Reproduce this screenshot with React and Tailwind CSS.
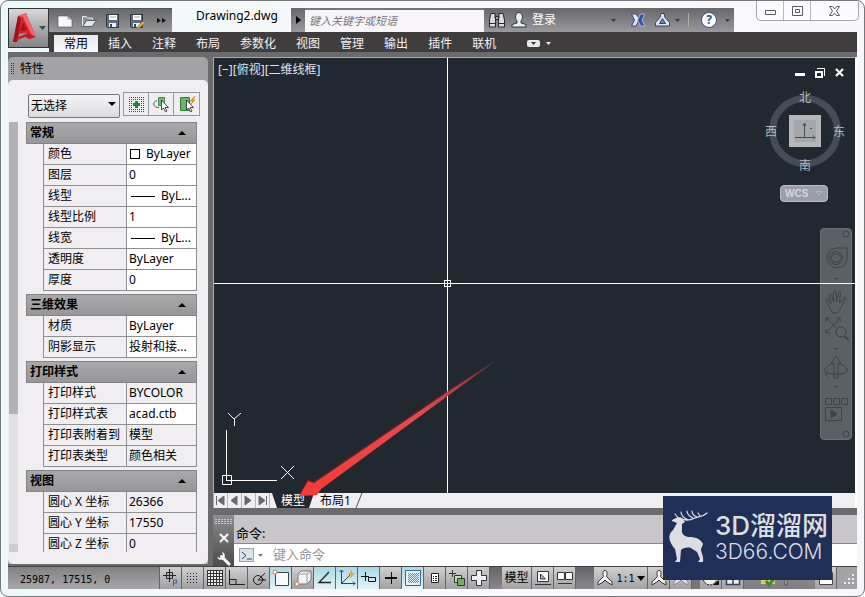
import React from "react";

const sections = [
  {
    title: "常规",
    rows: [
      ["颜色", "ByLayer", "swatch"],
      ["图层", "0"],
      ["线型", "ByL...", "line"],
      ["线型比例", "1"],
      ["线宽", "ByL...", "line"],
      ["透明度", "ByLayer"],
      ["厚度", "0"],
    ],
  },
  { title: "三维效果", rows: [["材质", "ByLayer"], ["阴影显示", "投射和接..."]] },
  {
    title: "打印样式",
    rows: [
      ["打印样式", "BYCOLOR", "locked"],
      ["打印样式表", "acad.ctb"],
      ["打印表附着到", "模型", "locked"],
      ["打印表类型", "颜色相关", "locked"],
    ],
  },
  {
    title: "视图",
    rows: [
      ["圆心 X 坐标", "26366", "locked"],
      ["圆心 Y 坐标", "17550", "locked"],
      ["圆心 Z 坐标", "0", "locked"],
    ],
  },
];

const tabs = ["常用", "插入", "注释", "布局", "参数化", "视图", "管理", "输出", "插件", "联机"];

function Icon({ w = 16, h = 16, children, className = "" }) {
  return (
    <svg width={w} height={h} viewBox={`0 0 ${w} ${h}`} fill="none" className={`shrink-0 ${className}`} aria-hidden="true">
      {children}
    </svg>
  );
}

function Caret({ className = "" }) {
  return (
    <Icon w={5} h={3} className={className}>
      <path d="M0 0h5L2.500 3z" fill="currentColor" />
    </Icon>
  );
}

function Save({ pen }) {
  return (
    <Icon>
      <path d="M1.500 1.500h12v13h-11l-1-1z" fill="#5e6b80" stroke="#303744" />
      <path d="M4 2h8v5H4z" fill="#fff" />
      <path d="M5 4h6" stroke="#9aa2ad" />
      <path d="M4 10h7v4H4z" fill="#eef1f5" />
      <path d="M5 11h2v3H5z" fill="#3e4655" />
      {pen && <path d="M8 14l6-6 2 2-6 5-3 1z" fill="#e9a94c" stroke="#8a6128" strokeWidth=".6" />}
    </Icon>
  );
}

function TitleBar() {
  return (
    <div className="flex h-6 items-stretch">
      <div className="flex flex-1 min-w-0 items-stretch">
        <div className="flex w-[123px] shrink-0 items-center gap-2 bg-linear-to-b from-[#68676a] to-[#99989b] pl-2 border-t border-[#555]">
          <button aria-label="新建">
            <Icon>
              <path d="M1 3h9l5 4v7H1z" fill="#f8f9fc" stroke="#4c505a" strokeWidth=".6" />
              <path d="M10 3l5 4h-5z" fill="#c3c8d2" />
            </Icon>
          </button>
          <button aria-label="打开">
            <Icon>
              <path d="M1.500 13V3.500h4l1 1.500h5v2" fill="#8d929d" stroke="#e8eaee" />
              <path d="M1.500 13.500l4-6h10l-4.500 6z" fill="#dfe3ea" stroke="#444a56" strokeWidth=".8" />
            </Icon>
          </button>
          <button aria-label="保存"><Save /></button>
          <button aria-label="另存为"><Save pen /></button>
          <button aria-label="更多" className="pl-1">
            <Icon w={9} h={7}>
              <path d="M0 1l4 2.500L0 6zM5 1l4 2.500L5 6z" fill="#111" />
            </Icon>
          </button>
        </div>
        <h1 className="w-[119px] shrink-0 pl-6 text-[12px] leading-4 text-black whitespace-nowrap">Drawing2.dwg</h1>
        <button aria-label="展开" className="grid w-3.5 shrink-0 place-items-center bg-linear-to-b from-[#68676a] to-[#99989b]">
          <Icon w={5} h={8}><path d="M0 0l5 4-5 4z" fill="#000" /></Icon>
        </button>
        <input aria-label="搜索" placeholder="键入关键字或短语" className="w-[179px] shrink-0 border-2 border-b-0 border-[#77767a] border-x-0 bg-[#f7f5f8] px-1 text-[11px] italic placeholder:text-[#77767a] outline-none" />
        <div className="flex min-w-0 flex-1 items-center bg-linear-to-b from-[#68676a] to-[#99989b] px-1 text-[#3c3c40]">
          <button aria-label="查找">
            <Icon w={18} h={18}>
              <path d="M3 2.500h4v4l.5 2v7.500H1.500V9zM11 2.500h4L16.500 9v7h-6V8.500l.5-2z" fill="#dcdde0" stroke="#29292c" />
              <path d="M7.500 5.500h3v3h-3z" fill="#aaa" stroke="#29292c" />
              <path d="M2 12.500h5M11 12.500h5" stroke="#29292c" />
            </Icon>
          </button>
          <button className="ml-1 flex items-center gap-1 text-[12px] text-white">
            <Icon w={18} h={18}>
              <path d="M5.500 6c0-6 7-6 7 0 0 2-1 3-1.500 4v2l5 1.500V16H2v-2.500L7 12v-2c-.5-1-1.500-2-1.500-4z" fill="#e9edf2" stroke="#33373e" />
            </Icon>
            登录
          </button>
          <div className="flex-1" />
          <Caret />
          <button aria-label="Exchange" className="ml-3.5">
            <Icon w={16} h={16}>
              <path d="M1.500 2h4.500l3 4-1 4-2 4H1.500l3-6z" fill="#e1e8f8" stroke="#35477d" />
              <path d="M15 2h-4.500L7.500 8l3 6H15l-3-6z" fill="#3456a8" stroke="#cbd6ef" strokeWidth=".7" />
            </Icon>
          </button>
          <button aria-label="连接" className="ml-2">
            <Icon w={17} h={16}>
              <path d="M7 1.500h3l1 4 4.500 5v3.500h-14v-3.500L6 5.500z" fill="#dbe3f4" stroke="#34456e" />
              <path d="M8.500 6.500l3 5h-6z" fill="#77819c" stroke="#34456e" />
            </Icon>
          </button>
          <Caret className="ml-1" />
          <div className="mx-2 h-3.5 w-px bg-[#aaa]" />
          <button aria-label="帮助" className="ml-1 grid size-4 place-items-center rounded-full border border-[#35527c] bg-white text-[12px] leading-3 font-bold text-[#26508c]">?</button>
          <Caret className="ml-2" />
        </div>
      </div>
      <div className="w-[123px] shrink-0" />
    </div>
  );
}

function WindowButtons() {
  return (
    <div className="absolute right-[5px] top-0 flex h-5 w-[103px] rounded-b-[5px] border border-t-0 border-[#a7a6aa] bg-[#fbfafc]">
      <button aria-label="最小化" className="grid flex-1 place-items-center border-r border-[#b9b8bc]">
        <Icon w={13} h={10}><path d="M1.500 4.500h10v4h-10z" fill="#fff" stroke="#59595f" /></Icon>
      </button>
      <button aria-label="最大化" className="grid flex-1 place-items-center border-r border-[#b9b8bc]">
        <Icon w={13} h={10}><path d="M1.500.5h10v9h-10zM4.500 3.500h4v3h-4z" fill="#fff" stroke="#59595f" /></Icon>
      </button>
      <button aria-label="关闭" className="grid w-[47px] place-items-center">
        <Icon w={13} h={10}><path d="M1.500.5h3l2 2.500 2-2.500h3L8.500 5l3 4.500h-3L6.500 7l-2 2.500h-3L4.500 5z" fill="#fff" stroke="#59595f" /></Icon>
      </button>
    </div>
  );
}

function Header() {
  return (
    <header className="flex shrink-0">
      <button aria-label="应用程序菜单" className="flex h-10 w-[41px] shrink-0 items-center border border-[#333] bg-linear-to-b from-[#d8d7da] to-[#838286]">
        <Icon w={30} h={34}>
          <path d="M4 31L9 5l8-3 10 24-7 2-2-6-8 1-1 7z" fill="#d7262e" />
          <path d="M9 5l8-3 10 24-3 1L14 6z" fill="#f0686b" />
          <path d="M4 31L9 5l3 3-4 23z" fill="#9e141d" />
          <path d="M14 11l4 8-7 1z" fill="#a5141e" />
          <path d="M4 31l5-5 10-4 8 4-7 2-4-2-8 3z" fill="#c41b24" />
        </Icon>
        <Icon w={7} h={4}><path d="M0 0h7L3.500 4z" fill="#46454a" /></Icon>
      </button>
      <div className="min-w-0 flex-1">
        <TitleBar />
        <nav className="flex h-5 items-end bg-[#403d3f] pl-[5px] text-[12px] text-[#f2f1f3]">
          {tabs.map((t, i) => (
            <button key={t} className={i === 0 ? "h-[17px] bg-linear-to-b from-[#e8e7ea] to-[#fafafc] px-2.5 leading-[17px] text-black" : "h-[17px] px-2.5 leading-[17px]"}>
              {t}
            </button>
          ))}
          <button aria-label="功能区选项" className="ml-[21px] flex h-[17px] items-center gap-1.5">
            <Icon w={13} h={7}>
              <rect width="13" height="7" rx="2" fill="#e8e8ea" />
              <path d="M4 2h5L6.500 5z" fill="#333" />
            </Icon>
            <Caret />
          </button>
        </nav>
      </div>
    </header>
  );
}

function Value({ text, kind }) {
  return (
    <span className="flex items-center whitespace-nowrap">
      {kind === "swatch" && <span className="mr-1.5 ml-px size-[10px] border border-black bg-white" />}
      {kind === "line" && <span className="mr-1.5 ml-0.5 h-px w-6 bg-black" />}
      {text}
    </span>
  );
}

function PropertySection({ title, rows }) {
  return (
    <section className="mb-[3px]">
      <button className="flex h-[22px] w-full items-center justify-between border border-[#858487] bg-linear-to-b from-[#a9a8aa] to-[#979698] pl-[3px] pr-2.5 text-[12px] font-bold text-black">
        {title}
        <Icon w={8} h={4}><path d="M0 4h8L4 0z" fill="#000" /></Icon>
      </button>
      <div className="pl-[17px]">
        <table className="w-full table-fixed border-separate border-spacing-0 border-l border-[#8f8e91] text-[12px] leading-[14px] text-black">
          <tbody>
            {rows.map(([label, value, kind]) => (
              <tr key={label}>
                <th scope="row" className="h-[21px] w-[83px] border-r border-b border-[#8f8e91] p-0 pl-1 text-left font-normal whitespace-nowrap">{label}</th>
                <td className={kind === "locked" ? "h-[21px] border-r border-b border-[#8f8e91] p-0 pl-0.5" : "h-[21px] border-r border-b border-[#8f8e91] bg-white p-0 pl-0.5"}>
                  <Value text={value} kind={kind} />
                </td>
              </tr>
            ))}
          </tbody>
        </table>
      </div>
    </section>
  );
}

function PropertiesPanel() {
  return (
    <aside className="flex w-[200px] shrink-0 flex-col rounded-t-[5px] bg-[#a3a2a4]">
      <div className="flex h-[23px] shrink-0 items-center gap-1.5 pl-[3px] text-[12px] text-black">
        <Icon w={3} h={12}><path d="M.5 0v12M2.500 0v12" stroke="#333" strokeDasharray="1 1" /></Icon>
        特性
      </div>
      <div className="flex min-h-0 flex-1 flex-col rounded-[5px] bg-[#f0eef1] pb-3">
        <div className="flex h-[42px] shrink-0 items-start gap-[3px] pt-3 pl-5">
          <div className="relative">
            <select aria-label="对象选择" className="h-6 w-[92px] appearance-none rounded-[2px] border border-[#77767a] bg-linear-to-b from-[#f4f3f5] to-[#dcdbdd] pl-0.5 text-[12px] text-black">
              <option>无选择</option>
            </select>
            <Icon w={8} h={4} className="pointer-events-none absolute top-2.5 right-1"><path d="M0 0h8L4 4z" fill="#000" /></Icon>
          </div>
          <div className="flex h-6 divide-x divide-[#99989b] border border-[#99989b]">
            <button aria-label="切换 PICKADD" className="grid w-[25px] place-items-center">
              <Icon w={15} h={15}>
                <path d="M0 .5h15M0 14.500h15M.5 0v15M14.500 0v15M2 2.500h11M2 12.500h11M2.500 2v11M12.500 2v11" stroke="#444" strokeDasharray="1 1" />
                <path d="M7.500 4v7M4 7.500h7" stroke="#178a2b" strokeWidth="3" />
              </Icon>
            </button>
            <button aria-label="选择对象" className="grid w-[25px] place-items-center">
              <Icon>
                <path d="M5.500 1.500h6v8h-6z" fill="#78b77b" stroke="#3f8f46" />
                <path d="M4 4.500C-1 6 0 12 6 11.500" stroke="#555" />
                <path d="M8.500 4v10l2-2 2 4 1.500-1-2-3.500h3.500z" fill="#fff" stroke="#222" strokeWidth=".8" />
              </Icon>
            </button>
            <button aria-label="快速选择" className="grid w-[25px] place-items-center">
              <Icon>
                <path d="M1.500 1.500h9v13h-9z" fill="#69b56c" stroke="#2d7a35" />
                <path d="M16 0l-5 5h3l-3 4 5-5h-2z" fill="#f0ab28" stroke="#b77612" strokeWidth=".5" />
                <path d="M7.500 4v10l2-2 2 4 1.500-1-2-3.500h3.500z" fill="#fff" stroke="#222" strokeWidth=".8" />
              </Icon>
            </button>
          </div>
        </div>
        <div className="flex min-h-0 flex-1 overflow-hidden">
          <div className="ml-px mr-2 flex w-[9px] shrink-0 flex-col bg-[#e2e0e3]">
            <div className="h-[68%] bg-[#b3b2b4]" />
            <div className="flex-1" />
            <div className="h-2 bg-[#cdccce]" />
          </div>
          <div className="min-w-0 flex-1 pr-[11px]">
            {sections.map((s) => <PropertySection key={s.title} {...s} />)}
          </div>
        </div>
      </div>
    </aside>
  );
}

function ViewCube() {
  return (
    <div className="absolute top-[31px] right-1 flex w-[88px] flex-col items-center">
      <svg width="88" height="85" viewBox="-5 0 88 85" fill="none" role="img" aria-label="ViewCube">
        <circle cx="37" cy="42" r="32.500" stroke="#454c57" strokeWidth="7" />
        <path d="M21 26h32v32H21z" fill="#b5b6b9" />
        <path d="M26 31h22v22H26z" fill="#a5a7aa" />
        <path d="M27 48.500h20M36.500 48V35M35 37l1.500-3 1.500 3M45 46.500l2 2-2 2M42 39.500h2" stroke="#484c52" />
        <g fill="#b4b8bf" fontSize="12" textAnchor="middle" fontFamily="'Noto Sans CJK SC', sans-serif">
          <text x="37" y="13">北</text>
          <text x="3" y="47">西</text>
          <text x="71" y="47">东</text>
          <text x="37" y="81">南</text>
        </g>
      </svg>
      <button className="mt-[11px] mr-1.5 flex h-[17px] w-12 items-center justify-between rounded-[4px] border border-[#b9bac4] bg-[#9c9daa] px-1 text-[10px] font-bold font-['Liberation_Sans'] text-[#d6d6de]">
        <span>WCS</span>
        <Icon w={8} h={5}><path d="M.5.500h7L4 4z" stroke="#b4b5c1" /></Icon>
      </button>
    </div>
  );
}

function NavBar() {
  return (
    <div className="absolute top-[170px] right-[3px] h-[212px] w-8 rounded-[4px] border border-[#6c7178] bg-[#5b6067]">
      <svg width="30" height="210" viewBox="0 0 30 210" fill="none" stroke="#3e434a" role="img" aria-label="导航栏">
        <circle cx="25" cy="5" r="3" />
        <path d="M16 19h10v10a10 10 0 1 1-10-10z" />
        <circle cx="15" cy="29" r="6.500" />
        <path d="M12 25h6l2 4-2 4h-6l-2-4z" />
        <path d="M9.500 80L5 72c-1-2 1-3 2-1l3 4-2-9c0-2 2-2 2.500 0l2 7v-10c0-2 2-2 2.500 0l.5 10 2-9c.5-2 2-1.500 2 0l-1 10 4-5c2-2 3 0 2 1l-5 9-3 5h-5z" />
        <path d="M5 89l15 14M19 89L5 104M5 93v-4h4M15 89h4v4M5 100v4h4" />
        <circle cx="20" cy="103" r="5" fill="#5b6067" />
        <path d="M23.500 107l4 4" strokeWidth="2" />
        <path d="M13 149v-15h-3l5-7 5 7h-3v15zM12 135C2 137 0 145 12 145h10M18 135c10 2 11 8 3 10M7 142l-3 3 3 3" />
        <path d="M4.500 169.500h6v6h-6zM12.500 169.500h6v6h-6zM20.500 169.500h6v6h-6zM4.500 178.500h16v13h-16z" />
        <path d="M10 181l6 4-6 4z" fill="#3e434a" />
        <circle cx="25" cy="205" r="3" />
        <path d="M13 49h5l-2.500 2zM13 119h5l-2.500 2zM13 157h5l-2.500 2z" fill="#3e434a" stroke="none" />
      </svg>
    </div>
  );
}

function Canvas() {
  return (
    <div className="relative min-h-0 flex-1 overflow-hidden bg-[#212830]">
      <span className="absolute top-1 left-1 text-[12px] leading-4 text-[#e0e2e5]">[−][俯视][二维线框]</span>
      <svg width="80" height="80" viewBox="0 0 80 80" fill="none" stroke="#fff" className="absolute bottom-0 left-1" role="img" aria-label="UCS">
        <path d="M4.500 62.500h9v9h-9zM8.500 68V17M8 67.500h51M63 53l13 13M76 53L63 66M10 0l6 6 7-6M16.500 6v7" />
      </svg>
      <div className="absolute top-2.5 right-[11px] flex items-center gap-2.5">
        <button aria-label="最小化视口"><Icon w={10} h={10}><path d="M0 5h10v3H0z" fill="#fff" /></Icon></button>
        <button aria-label="还原视口"><Icon w={10} h={10}><path d="M1 4h6v5H1z" stroke="#fff" strokeWidth="2" /><path d="M2 .5h7.500V8" stroke="#fff" /></Icon></button>
        <button aria-label="关闭视口"><Icon w={9} h={10}><path d="M1 1l7 7M8 1L1 8" stroke="#fff" strokeWidth="2.200" /></Icon></button>
      </div>
      <ViewCube />
      <NavBar />
      <div className="absolute top-0 bottom-0 left-[233px] w-px bg-white" />
      <div className="absolute top-[225px] right-0 left-0 h-px bg-white" />
      <div className="absolute top-[222px] left-[230px] size-[7px] border border-white" />
    </div>
  );
}

function LayoutTabs() {
  const arrows = ["M2.500 2v9M10 2v9L4 6.500z", "M9 2v9L3 6.500z", "M3 2v9l6-4.500z", "M10.500 2v9M3 2v9l6-4.500z"];
  return (
    <div className="flex h-[15px] shrink-0 bg-[#f0eef1]">
      {arrows.map((d, i) => (
        <button key={i} aria-label={`导航 ${i + 1}`} className="grid w-3.5 place-items-center border-r border-[#b7b6b9]">
          <Icon w={13} h={13}><path d={d} fill="#68676b" stroke="#68676b" /></Icon>
        </button>
      ))}
      <button className="ml-0.5 w-[42px] bg-[#212830] text-[12px] leading-[15px] text-white [clip-path:polygon(0_0,100%_0,88%_100%,12%_100%)]">模型</button>
      <button className="ml-1.5 text-[12px] leading-[15px] text-black">布局1</button>
      <Icon w={8} h={15} className="ml-1"><path d="M1 15L7 0" stroke="#555" /></Icon>
    </div>
  );
}

function CommandLine() {
  return (
    <div className="mt-[7px] flex h-[51px] shrink-0">
      <div className="flex w-[21px] shrink-0 flex-col items-center justify-between bg-linear-to-b from-[#8d8c8f] to-[#4c4b4e] pt-1">
        <Icon w={17} h={5}><path d="M0 .5h17M0 2.500h17M0 4.500h17" stroke="#c9c8ca" strokeDasharray="2 1" /></Icon>
        <button aria-label="关闭命令行"><Icon w={10} h={10}><path d="M1 1l8 8M9 1L1 9" stroke="#fff" strokeWidth="2" /></Icon></button>
        <button aria-label="自定义">
          <Icon w={15} h={15}>
            <path d="M5.500 5.500L13 13" stroke="#fff" strokeWidth="3" strokeLinecap="round" />
            <path d="M6 1a4 4 0 1 1-5 5l3 1 3-3z" fill="#fff" />
          </Icon>
        </button>
      </div>
      <div className="flex min-w-0 flex-1 flex-col">
        <div className="flex h-[29px] items-end border-b border-[#88878a] bg-[#c8c6c9] pb-0.5 pl-0.5 text-[13px] leading-4 text-black">命令:</div>
        <label className="flex flex-1 items-center bg-white pl-[5px]">
          <span className="grid h-[14px] w-[15px] place-items-center border border-[#9aa3ae] bg-[#dbe2ea]">
            <Icon w={11} h={9}><path d="M1 1l4 3.500L1 8M6 8h5" stroke="#32435a" /></Icon>
          </span>
          <Caret className="ml-1 text-[#777]" />
          <input aria-label="命令输入" placeholder="键入命令" className="ml-2.5 min-w-0 flex-1 bg-transparent text-[13px] placeholder:text-[#97969a] outline-none" />
        </label>
      </div>
    </div>
  );
}

const toggles = [
  ["推断约束", false, <g key="a"><path d="M1 6.500h13M7.500 0v13M4.500 3.500h6v6h-6z" stroke="#222" /><path d="M11.500 17v-6h3v3h-3" stroke="#3b5f9c" /></g>],
  ["捕捉", false, <path key="a" d="M3 4.500h12M3 7.500h12M3 10.500h12M3 13.500h12" stroke="#222" strokeDasharray="1 2" />],
  ["栅格", false, <g key="a"><path d="M1 1h16v16H1z" fill="#eee" /><path d="M1.500 1v16M4.500 1v16M7.500 1v16M10.500 1v16M13.500 1v16M16.500 1v16M1 1.500h16M1 4.500h16M1 7.500h16M1 10.500h16M1 13.500h16M1 16.500h16" stroke="#333" /></g>],
  ["正交", false, <path key="a" d="M1.500 1v14.500H17M2 10.500h6V15" stroke="#222" />],
  ["极轴", false, <g key="a" stroke="#222"><circle cx="8" cy="11" r="4.500" /><path d="M8 11l7-7M8 11h8M11 8l3 3" /></g>],
  ["对象捕捉", true, <g key="a"><path d="M3.500 3.500h13v13h-13z" stroke="#444" fill="#f5fafb" /><circle cx="3" cy="3" r="2" fill="#fff" stroke="#d87542" /></g>],
  ["三维对象捕捉", false, <g key="a"><path d="M4 5l3-3h10v9l-4 4H4z" fill="#f3f3f5" stroke="#777" /><path d="M4 5h9v10M13 5l4-3" stroke="#999" /><circle cx="3" cy="15" r="2" fill="#fff" stroke="#d87542" /></g>],
  ["对象追踪", true, <path key="a" d="M13 3L3 13.500h12" stroke="#222" strokeWidth="1.300" />],
  ["动态 UCS", true, <g key="a"><path d="M3.500 1v13.500H17M3 15L13 5M1.500 3l2-2 2 2M15 12.500l2 2-2 2" stroke="#345" /><path d="M14 0l-4 6h3l-2 5 6-7h-3z" fill="#eaa63c" /></g>],
  ["动态输入", true, <path key="a" d="M1 7.500h8M5.500 3v9M8.500 8.500h7v4h-7z" stroke="#111" />],
  ["线宽", false, <g key="a"><path d="M3 9h12" stroke="#111" strokeWidth="2" /><path d="M9.500 3v12" stroke="#111" /></g>],
  ["透明度", true, <g key="a"><path d="M1.500 1.500h15v15h-15z" fill="#e2f3fb" stroke="#356b91" /><path d="M4 4.500h11M4 6.500h11M4 8.500h11M4 10.500h11M4 12.500h11" stroke="#4c93bf" strokeDasharray="1 1" /><path d="M4 5.500h11M4 7.500h11M4 9.500h11M4 11.500h11M4 13.500h11" stroke="#4c93bf" strokeDasharray="1 1" strokeDashoffset="1" /></g>],
  ["快捷特性", false, <g key="a"><path d="M5.500 4.500h7v9h-7z" fill="#fff" stroke="#222" /><path d="M7 7.500h1M9 7.500h2M7 9.500h1M9 9.500h2M7 11.500h1M9 11.500h2" stroke="#222" /></g>],
  ["选择循环", false, <g key="a"><path d="M1 4.500h7M4.500 1v7" stroke="#333" /><path d="M6.500 6.500h7v7h-7z" fill="#bfe0b3" stroke="#333" /><path d="M9.500 9.500h7v7h-7z" fill="#6fb35a" stroke="#333" /></g>],
  ["注释监视器", false, <path key="a" d="M6.500 1.500h5v5h5v5h-5v5h-5v-5h-5v-5h5z" fill="#eef2f6" stroke="#333" />],
];

const cell = "grid h-full w-[22px] shrink-0 place-items-center border-r border-[#656468] bg-linear-to-b from-[#d0cfd1] to-[#a1a0a3]";
const person = "M9 1.500c3 0 2 4 1.500 6L16 13v3l-5-3-2-2-2 2-5 3v-3l5.500-5.500C7 5.500 6 1.500 9 1.500z";

function StatusBar() {
  return (
    <footer className="flex h-[23px] shrink-0 items-stretch border-t border-[#444] bg-[#a3a2a5] text-black">
      <div className="flex w-[152px] shrink-0 items-center border-r border-[#656468] bg-linear-to-b from-[#828184] to-[#a9a8ab] pt-0.5 pl-3 font-['DejaVu_Sans_Mono'] text-[10px] whitespace-pre">25987, 17515, 0</div>
      {toggles.map(([name, on, art]) => (
        <button key={name} aria-label={name} aria-pressed={on} className={on ? "grid h-full w-[22px] shrink-0 place-items-center border-r border-[#656468] bg-linear-to-b from-[#a8d8e5] to-[#e4f4f8]" : cell}>
          <Icon w={18} h={18}>{art}</Icon>
        </button>
      ))}
      <div className="w-3 shrink-0 bg-linear-to-b from-[#656468] to-[#8a898c]" />
      <button className="w-[30px] shrink-0 border-r border-[#656468] bg-linear-to-b from-[#d0cfd1] to-[#a1a0a3] text-[12px] whitespace-nowrap">模型</button>
      <button aria-label="快速查看布局" className={cell}><Icon w={18} h={18}><path d="M3.500 2.500h11v10h-11zM1 15.500h16M6.500 5v5h5z" fill="#fff" stroke="#333" /></Icon></button>
      <button aria-label="快速查看图形" className={cell}><Icon w={18} h={18}><path d="M1.500 3.500h7v7h-7zM9.500 3.500h7v7h-7zM2 14.500h14" fill="#fff" stroke="#333" /></Icon></button>
      <div className="w-[18px] shrink-0 bg-linear-to-b from-[#656468] to-[#8a898c]" />
      <button className="flex w-[54px] shrink-0 items-center justify-center gap-0.5 border-r border-[#656468] bg-linear-to-b from-[#d0cfd1] to-[#a1a0a3] font-['DejaVu_Sans_Mono'] text-[10px]">
        <Icon w={18} h={18}><path d={person} fill="#f4f4f6" stroke="#333" /></Icon>
        1:1
        <Icon w={8} h={5}><path d="M0 0h8L4 5z" fill="#000" /></Icon>
      </button>
      <button aria-label="注释可见性" className={cell}><Icon w={18} h={18}><path d={person} fill="#f4f4f6" stroke="#333" /><path d="M14 4c4 0 3 4 2 5v3h-3V9c-2-2-1-5 1-5z" fill="#f6d58a" /></Icon></button>
      <button aria-label="自动添加比例" className={cell}><Icon w={18} h={18}><path d={person} fill="#e6e6e8" stroke="#88878b" /></Icon></button>
      <div className="w-2 shrink-0 bg-[#777679]" />
      <button aria-label="切换工作空间" className={cell}><Icon w={18} h={18}><circle cx="8" cy="9" r="5" fill="#eee" stroke="#eee" strokeWidth="3" /><circle cx="8" cy="9" r="7" stroke="#222" strokeDasharray="2 1" /><path d="M11 16h6v-5z" fill="#111" /></Icon></button>
      <button aria-label="锁定" className={cell}><Icon w={18} h={18}><path d="M2.500 3.500h13v12h-13zM9 5v10" fill="#eee" stroke="#345" strokeWidth="1.500" /></Icon></button>
      <div className="flex min-w-0 flex-1 items-center justify-between bg-linear-to-b from-[#8f8e91] to-[#7f7e81] pr-8 pl-4">
        <Icon w={18} h={18}><path d="M1 5h14v10H1z" fill="#e2ca55" /><path d="M6 12l3 4 7-9" stroke="#3b8b35" strokeWidth="3" /></Icon>
        <Icon w={18} h={18}><path d="M5 4h6l-2 5v7H7V9z" fill="#e2e3ba" stroke="#444" /></Icon>
      </div>
      <button aria-label="全屏显示" className={cell}><Icon w={18} h={18}><path d="M2.500 3.500h13v12h-13z" fill="#fff" stroke="#444" /></Icon></button>
      <div className="flex w-5 shrink-0 items-end justify-end pr-0.5 pb-1">
        <Icon w={11} h={11}><path d="M8 0h2v2H8zM8 4h2v2H8zM8 8h2v2H8zM4 4h2v2H4zM4 8h2v2H4zM0 8h2v2H0z" fill="#eee" /></Icon>
      </div>
    </footer>
  );
}

function Arrow() {
  return (
    <svg width="202" height="140" viewBox="0 0 202 140" className="pointer-events-none absolute bottom-[68px] left-[85px]" aria-hidden="true">
      <defs>
        <linearGradient id="arrow" x1="0" y1="1" x2="1" y2="0">
          <stop offset="0" stopColor="#f83a38" />
          <stop offset=".6" stopColor="#e8484a" />
          <stop offset="1" stopColor="#6f3a41" />
        </linearGradient>
      </defs>
      <path d="M200 1L148 35 16 125l-6-2L1 138l18-1 4-6z" fill="url(#arrow)" />
      <path d="M180 14L148 34 16 124l-6-2L3 134" fill="none" stroke="#8f1a20" strokeWidth=".8" />
    </svg>
  );
}

function Watermark() {
  return (
    <div className="absolute right-8 bottom-4 flex h-[84px] w-[169px] items-center bg-[#202f57] text-[#dcdee2]">
      <svg width="50" height="84" viewBox="0 0 50 84" className="shrink-0" fill="none" aria-hidden="true">
        <path d="M9 24l6-3 4 1 3 4-3 2v4c-1 6 2 8 6 9 7 0 12 1 15 7l-2 5c0 4 3 7 2 13h-5l2-3-3-7-6-4c-4-1-8 0-10 2l-1 12h-5l2-3-2-10C6 46 4 39 10 34l4-7-5-2z" fill="#dcdee2" />
        <path d="M17 22c6 4 11 2 15 0 4-2 8-1 12-5M25 24c-4-2-7-4-7-8M30 22c-4-2-6-4-6-7M34 21c-3-1-5-3-5-6M37 20l-2-3M16 23l-4-5" stroke="#dcdee2" strokeWidth="1.200" strokeLinecap="round" />
      </svg>
      <div className="whitespace-nowrap pl-0.5">
        <div className="font-['Inter','Noto_Sans_CJK_SC',sans-serif] text-[26px] leading-[28px] font-medium">3D溜溜网</div>
        <div className="font-['Inter',sans-serif] text-[21px] leading-[24px] font-light">3D66.COM</div>
      </div>
    </div>
  );
}

export default function App() {
  return (
    <div className="relative flex h-screen flex-col overflow-hidden rounded-[8px] border border-[#77767a] bg-linear-to-r from-[#edf8f8] via-[#faf9fb] to-[#f7f6f8] p-[7px] font-['Noto_Sans','Noto_Sans_CJK_SC',sans-serif]">
      <Header />
      <WindowButtons />
      <div className="flex min-h-0 flex-1 bg-[#6b6a6c] pt-[5px]">
        <div className="flex shrink-0 pb-0.5"><PropertiesPanel /></div>
        <main className="relative ml-[5px] flex min-w-0 flex-1 flex-col">
          <div className="flex min-h-0 flex-1 flex-col border-t border-l border-[#aaa9ac] border-r-2 border-r-white">
            <Canvas />
            <LayoutTabs />
          </div>
          <CommandLine />
          <Arrow />
        </main>
      </div>
      <StatusBar />
      <Watermark />
    </div>
  );
}
